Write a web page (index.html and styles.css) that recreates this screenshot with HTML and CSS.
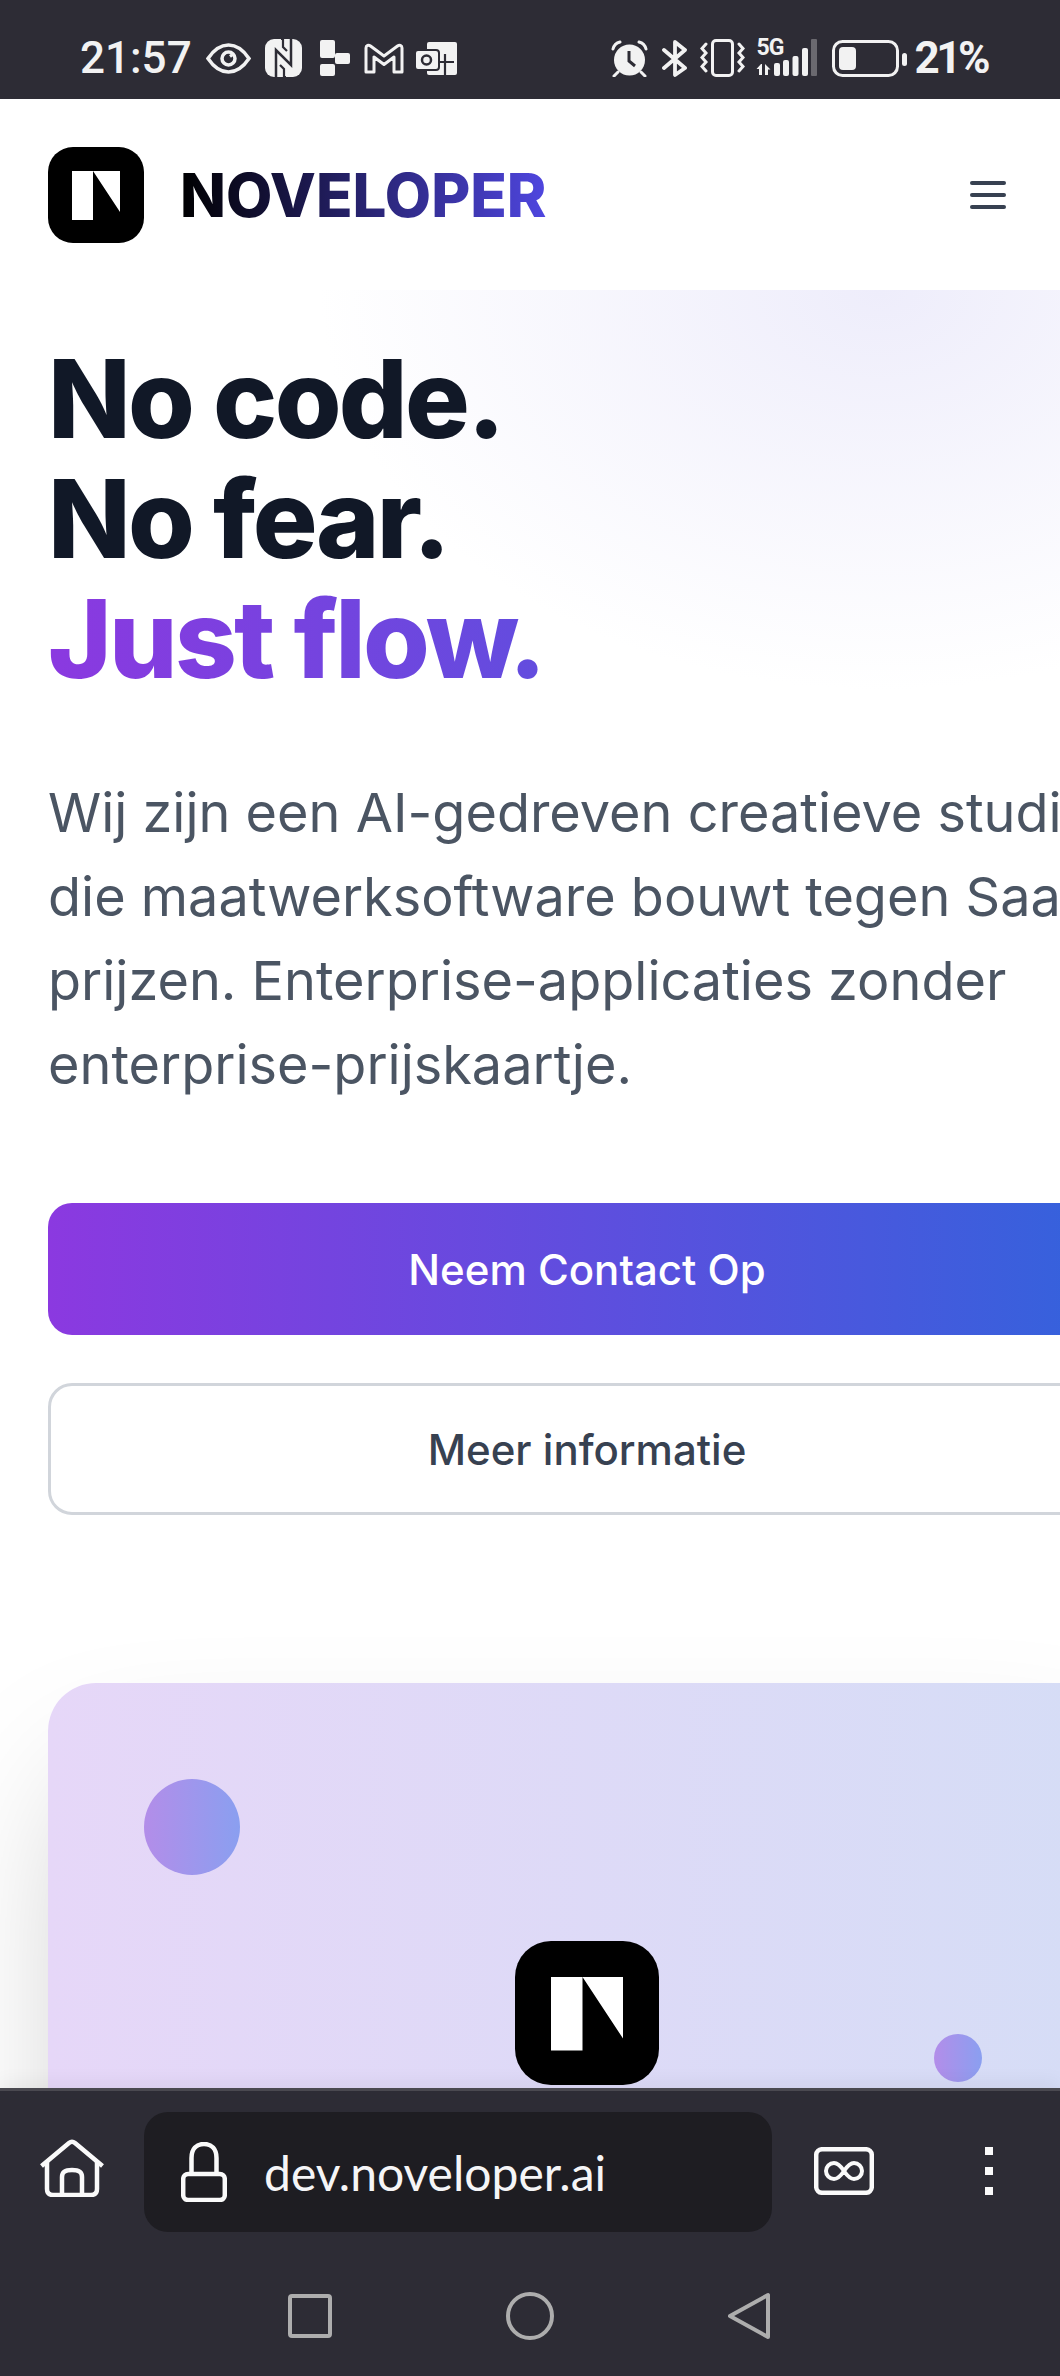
FILE: index.html
```html
<!DOCTYPE html>
<html lang="nl">
	<head>
		<meta charset="UTF-8" />
		<meta name="viewport" content="width=device-width, initial-scale=1.0" />
		<title>Noveloper</title>
		<link rel="stylesheet" href="styles.css">
	</head>
	<body>
		<svg class="defs" width="0" height="0" aria-hidden="true">
			<symbol id="mark" viewBox="0 0 96 96">
				<path d="M24 24h21v49H24z M45 24h27v41z" fill="#fff" />
			</symbol>
		</svg>

		<div class="phone">
			<div class="status-bar">
				<span class="status-text">21:57</span>
				<svg class="ic-eye" width="45" height="31" viewBox="0 0 45 31"><path d="M2 15.500C8 6.500 15 2 22.500 2S37 6.500 43 15.500C37 24.500 30 29 22.500 29S8 24.500 2 15.500Z" fill="none" stroke="#f2f2f2" stroke-width="3.500"/><circle cx="22.500" cy="15.500" r="6.500" fill="none" stroke="#f2f2f2" stroke-width="3.500"/><path d="M24 13.500l2.500-2" stroke="#f2f2f2" stroke-width="3"/></svg>
				<svg class="ic-nfc" width="37" height="38" viewBox="0 0 37 38"><rect width="37" height="38" rx="9" fill="#f2f2f2"/><path d="M11 38V11l15 15V0" fill="none" stroke="#2d2c35" stroke-width="2.500"/><path d="M16 0h2v8l4 4 M21 38h-2v-8l-4-4" fill="none" stroke="#2d2c35" stroke-width="2.200"/></svg>
				<svg class="ic-flag" width="30" height="36" viewBox="0 0 30 36"><rect width="15" height="18" rx="2" fill="#f2f2f2"/><rect x="15" y="13" width="15" height="11" rx="2" fill="#f2f2f2"/><rect y="24" width="15" height="12" rx="2" fill="#f2f2f2"/></svg>
				<svg class="ic-gmail" width="40" height="31" viewBox="0 0 40 31"><path d="M2 29V5c0-3 2.500-3.500 4.500-2L20 13 33.500 3c2-1.500 4.500-1 4.500 2v24h-8V14L20 21.500 10 14v15Z" fill="none" stroke="#f2f2f2" stroke-width="3" stroke-linejoin="round"/></svg>
				<svg class="ic-outlook" width="41" height="33" viewBox="0 0 41 33"><rect x="11" width="30" height="33" rx="2" fill="#f2f2f2"/><rect x="-1" y="8" width="24" height="20" rx="3" fill="#f2f2f2" stroke="#2d2c35" stroke-width="2"/><circle cx="10.500" cy="18" r="4.500" fill="none" stroke="#2d2c35" stroke-width="2.500"/><path d="M23 20h15 M29 12v21" stroke="#2d2c35" stroke-width="2.200"/></svg>

				<svg class="ic-alarm status-right" width="37" height="37" viewBox="0 0 37 37"><circle cx="18.500" cy="20" r="15.500" fill="#f2f2f2"/><path d="M18 11v10l6 5" fill="none" stroke="#2d2c35" stroke-width="3"/><path d="M2 9c1-4 3-6 7-7 M35 9c-1-4-3-6-7-7 M7 32l-4 4 M30 32l4 4" fill="none" stroke="#f2f2f2" stroke-width="3" stroke-linecap="round"/></svg>
				<svg class="ic-bt" width="25" height="37" viewBox="0 0 25 37"><path d="M2 10l21 18-10 7V2l10 8L2 28" fill="none" stroke="#f2f2f2" stroke-width="3.800" stroke-linejoin="round" stroke-linecap="round"/></svg>
				<svg class="ic-vibrate" width="45" height="38" viewBox="0 0 45 38"><rect x="12.500" y="1.500" width="20" height="35" rx="3.500" fill="none" stroke="#f2f2f2" stroke-width="3"/><path d="M6 5L2 9.500l4 4.500-4 4.500 4 4.500-4 4.500L6 32 M39 5l4 4.500L39 14l4 4.500L39 23l4 4.500L39 32" fill="none" stroke="#f2f2f2" stroke-width="3" stroke-linecap="round"/></svg>
				<div class="signal">
					<span class="signal-tech">5G</span>
					<svg width="61" height="38" viewBox="0 0 61 38"><path d="M5 25l-4.500 5H3v6h3V25z M9 36V25l5.500 5.500H12V36z" fill="#f2f2f2"/><rect x="18" y="24" width="6" height="13" rx="2" fill="#f2f2f2"/><rect x="27" y="21" width="6" height="16" rx="2" fill="#f2f2f2"/><rect x="36.500" y="17" width="6" height="20" rx="2" fill="#f2f2f2"/><rect x="46" y="9" width="6" height="28" rx="2" fill="#f2f2f2"/><rect x="55" y="0" width="6" height="37" rx="1" fill="#6a696f"/></svg>
				</div>
				<svg class="ic-battery" width="75" height="37" viewBox="0 0 75 37"><rect x="1.500" y="1.500" width="64" height="34" rx="9" fill="none" stroke="#f2f2f2" stroke-width="3"/><rect x="7" y="7" width="17" height="23" rx="4" fill="#f2f2f2"/><rect x="70" y="13" width="5" height="13" rx="2.500" fill="#f2f2f2"/></svg>
				<span class="status-text status-pct">21%</span>
			</div>

			<div class="page">
				<header class="site-header">
					<a class="brand">
						<svg class="brand-mark" width="96" height="96"><use href="#mark" /></svg>
						<span class="brand-name">NOVELOPER</span>
					</a>
					<button class="menu-btn" aria-label="Menu"><span></span><span></span><span></span></button>
				</header>

				<section class="hero">
					<h1>No code.<br />No fear.<br /><span class="grad-text">Just flow.</span></h1>
					<p class="lead">Wij zijn een AI-gedreven creatieve studio die maatwerksoftware bouwt tegen SaaS-prijzen. Enterprise-applicaties zonder enterprise-prijskaartje.</p>
					<div class="actions">
						<a class="btn btn-primary">Neem Contact Op</a>
						<a class="btn btn-outline">Meer informatie</a>
					</div>
					<div class="visual">
						<span class="dot dot-big"></span>
						<span class="dot dot-small"></span>
						<svg class="visual-mark" width="144" height="144"><use href="#mark" /></svg>
					</div>
				</section>
			</div>

			<div class="browser-bar">
				<div class="toolbar">
					<svg class="ic-home" width="64" height="58" viewBox="0 0 64 58"><path d="M1.500 27L29 4c2-1.700 4-1.700 6 0l27.500 23" fill="none" stroke="#fafafa" stroke-width="4.500" stroke-linejoin="round"/><path d="M7 22v28c0 4 2 6 6 6h38c4 0 6-2 6-6V22" fill="none" stroke="#fafafa" stroke-width="4.500"/><path d="M22 55V38c0-5 3-7 10-7s10 2 10 7v17" fill="none" stroke="#fafafa" stroke-width="4.500"/></svg>
					<div class="url-box">
						<svg class="ic-lock" width="46" height="60" viewBox="0 0 46 60"><path d="M10.500 33V16C10.500 7 15.500 2 23 2s12.500 5 12.500 14v17" fill="none" stroke="#fafafa" stroke-width="4.500"/><rect x="2.200" y="32" width="41.600" height="26" rx="5" fill="none" stroke="#fafafa" stroke-width="4.500"/></svg>
						<span class="url-text">dev.noveloper.ai</span>
					</div>
					<svg class="ic-tabs" width="60" height="48" viewBox="0 0 60 48"><rect x="2.200" y="2.200" width="55.600" height="43.600" rx="6" fill="none" stroke="#fafafa" stroke-width="4.500"/><path d="M30 24c-4-6-7-8-10-8a8 8 0 0 0 0 16c3 0 6-2 10-8s7-8 10-8a8 8 0 0 1 0 16c-3 0-6-2-10-8Z" fill="none" stroke="#fafafa" stroke-width="4"/></svg>
					<div class="more-btn"><span></span><span></span><span></span></div>
				</div>
				<div class="nav-row">
					<svg width="44" height="44" viewBox="0 0 44 44"><rect x="2" y="2" width="40" height="40" rx="2" fill="none" stroke="#adadad" stroke-width="4"/></svg>
					<svg width="48" height="48" viewBox="0 0 48 48"><circle cx="24" cy="24" r="22" fill="none" stroke="#adadad" stroke-width="4"/></svg>
					<svg width="42" height="48" viewBox="0 0 42 48"><path d="M40 3v42L2 24Z" fill="none" stroke="#adadad" stroke-width="4" stroke-linejoin="round"/></svg>
				</div>
			</div>
		</div>
	</body>
</html>
```

FILE: styles.css
```css
* {
	box-sizing: border-box;
}

body {
	margin: 0;
	font-family: Inter, "Liberation Sans", sans-serif;
	background: #fff;
	overflow: hidden;
}

.defs {
	position: absolute;
}

.phone {
	display: flex;
	flex-direction: column;
	height: 2376px;
	overflow: hidden;
}

/* android status bar */
.status-bar {
	flex: none;
	display: flex;
	align-items: center;
	height: 99px;
	padding: 17px 73px 0 80px;
	background: #2d2c35;
	color: #f2f2f2;
}

.status-bar svg {
	flex: none;
}

.status-text {
	font-family: Roboto, sans-serif;
	font-weight: 500;
	font-size: 44px;
	line-height: 1;
}

.ic-eye {
	margin-left: 14px;
}

.ic-nfc {
	margin-left: 14px;
}

.ic-flag {
	margin-left: 18px;
}

.ic-gmail {
	margin-left: 14px;
}

.ic-outlook {
	margin-left: 12px;
}

.status-right {
	margin-left: auto;
}

.ic-bt {
	margin-left: 14px;
}

.ic-vibrate {
	margin-left: 13px;
}

.signal {
	position: relative;
	margin-left: 11px;
	width: 61px;
	height: 38px;
}

.signal-tech {
	position: absolute;
	left: 0;
	top: 0;
	font-family: Roboto, sans-serif;
	font-weight: 700;
	font-size: 23px;
	line-height: 18px;
	letter-spacing: -1px;
}

.ic-battery {
	margin-left: 15px;
}

.status-pct {
	margin-left: 7px;
	font-weight: 700;
	letter-spacing: -3.5px;
}

/* page */
.page {
	flex: 1;
	min-height: 0;
	overflow: hidden;
}

.site-header {
	display: flex;
	align-items: center;
	justify-content: space-between;
	height: 191px;
	padding: 0 54px 0 48px;
	background: #fff;
}

.brand {
	display: flex;
	align-items: center;
	gap: 36px;
}

.brand-mark {
	background: #000;
	border-radius: 25px;
}

.brand-name {
	font-weight: 800;
	font-size: 60px;
	background: linear-gradient(to right, #000, #4f46e0);
	-webkit-background-clip: text;
	background-clip: text;
	color: transparent;
}

.menu-btn {
	display: flex;
	flex-direction: column;
	gap: 8px;
	width: 36px;
	padding: 0;
	border: none;
	background: none;
}

.menu-btn span {
	height: 4px;
	border-radius: 2px;
	background: #374151;
}

.hero {
	width: 1174px;
	padding: 49px 48px 0;
	background: radial-gradient(ellipse 560px 400px at 880px 0, #eeedfb, rgba(238, 237, 251, 0));
}

h1 {
	margin: 0;
	font-weight: 800;
	font-size: 108px;
	line-height: 120px;
	letter-spacing: -2.7px;
	color: #111827;
}

.grad-text {
	display: inline-block;
	width: 1078px;
	background: linear-gradient(to right, #8b39e0, #3263dc);
	-webkit-background-clip: text;
	background-clip: text;
	color: transparent;
}

.lead {
	margin: 72px 0 0;
	font-size: 54px;
	line-height: 84px;
	color: #4b5563;
}

.actions {
	display: flex;
	flex-direction: column;
	gap: 48px;
	margin-top: 96px;
}

.btn {
	display: flex;
	align-items: center;
	justify-content: center;
	height: 132px;
	border-radius: 24px;
	font-weight: 500;
	font-size: 42px;
}

.btn-primary {
	background: linear-gradient(to right, #8b39e0, #3263dc);
	color: #fff;
}

.btn-outline {
	border: 3px solid #d1d5db;
	background: #fff;
	color: #374151;
}

.visual {
	position: relative;
	display: flex;
	justify-content: center;
	height: 900px;
	margin-top: 168px;
	padding-top: 258px;
	border-radius: 48px;
	background: linear-gradient(to right, #e6d7f8, #d5ddf6);
	box-shadow: 0 75px 150px -36px rgba(0, 0, 0, 0.25);
}

.visual-mark {
	background: #000;
	border-radius: 36px;
}

.dot {
	position: absolute;
	border-radius: 50%;
	background: linear-gradient(to right, #b38de9, #8a9ff0);
}

.dot-big {
	left: 96px;
	top: 96px;
	width: 96px;
	height: 96px;
}

.dot-small {
	right: 144px;
	top: 351px;
	width: 48px;
	height: 48px;
}

/* browser chrome */
.browser-bar {
	flex: none;
	position: relative;
	height: 288px;
	border-top: 3px solid #4a4950;
	background: #2d2c35;
	box-shadow: 0 -6px 18px rgba(0, 0, 0, 0.05);
}

.toolbar {
	display: flex;
	align-items: center;
	height: 141px;
	padding: 21px 0 0 40px;
}

.ic-home {
	margin-top: -9px;
}

.url-box {
	display: flex;
	align-items: center;
	gap: 37px;
	width: 628px;
	height: 120px;
	margin-left: 40px;
	padding-left: 37px;
	border-radius: 24px;
	background: #1e1d22;
}

.url-text {
	font-family: Lato, sans-serif;
	font-size: 48px;
	color: #f5f5f7;
}

.ic-tabs {
	margin: -2px 0 0 42px;
}

.more-btn {
	display: flex;
	flex-direction: column;
	gap: 12px;
	margin: -2px 0 0 111px;
}

.more-btn span {
	width: 8px;
	height: 8px;
	background: #fafafa;
}

.nav-row {
	display: flex;
	align-items: center;
	gap: 174px;
	height: 48px;
	margin-top: 60px;
	padding-left: 288px;
}
```
